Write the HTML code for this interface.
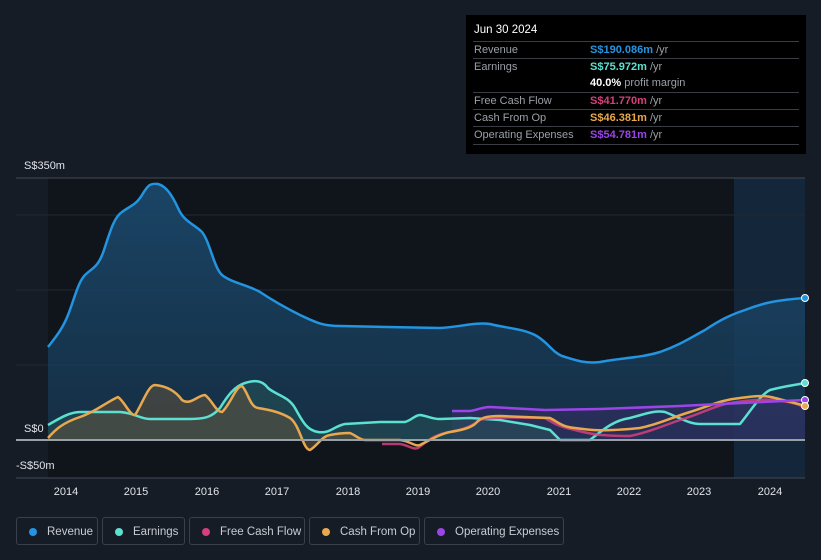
<!DOCTYPE html>
<html><head><meta charset="utf-8"><style>
body{margin:0;width:821px;height:560px;background:#161c26;font-family:"Liberation Sans",sans-serif;overflow:hidden;position:relative}
.tip{position:absolute;left:466px;top:15px;width:340px;height:139px;background:#000;color:#fff;font-size:11px}
.tip .h{position:absolute;left:8px;top:9px;font-size:11.5px}
.row{position:absolute;left:7px;width:326px;border-top:1px solid #3a3d44;height:17px}
.row span.l{position:absolute;left:1px;top:2px;color:#9aa0a8}
.row span.v{position:absolute;left:117px;top:2px;font-weight:bold}
.row span.v i{font-style:normal;font-weight:normal;color:#9aa0a8}
.leg{position:absolute;top:517px;height:28px;border:1px solid #3a404b;border-radius:3px;color:#c8ccd2;font-size:11.5px;line-height:28px;box-sizing:border-box;padding-left:30px}
.leg b{position:absolute;left:12px;top:10px;width:8px;height:8px;border-radius:50%}
.ax{position:absolute;color:#e0e3e8;font-size:11px}
</style></head><body>
<svg width="821" height="560" style="position:absolute;left:0;top:0">
<defs>
<linearGradient id="rv" x1="0" y1="0" x2="0" y2="1"><stop offset="0" stop-color="#1b4a6e" stop-opacity=".9"/><stop offset="1" stop-color="#173a56" stop-opacity=".7"/></linearGradient>
</defs>
<rect x="48" y="178" width="686" height="300" fill="#10141b"/>
<rect x="734" y="178" width="71" height="300" fill="#13263a"/>
<line x1="16" y1="178" x2="805" y2="178" stroke="#444a55"/>
<line x1="16" y1="215" x2="805" y2="215" stroke="#222833"/>
<line x1="16" y1="290" x2="805" y2="290" stroke="#222833"/>
<line x1="16" y1="365" x2="805" y2="365" stroke="#222833"/>
<line x1="16" y1="478" x2="805" y2="478" stroke="#444a55"/>
<path d="M48,347 C55,338 62,330 68,315 C74,300 78,282 85,275 C92,268 98,268 104,250 C110,232 114,217 122,212 C130,206 136,205 142,195 C148,185 150,183 158,184 C166,186 172,195 178,208 C184,222 194,224 202,232 C210,242 214,268 222,275 C232,283 248,285 260,292 C272,300 282,306 300,315 C315,322 322,326 340,326 L440,328 C460,327 475,322 490,324 C505,328 520,328 535,335 C548,342 552,352 562,356 C575,360 585,364 600,362 C620,358 640,358 660,352 C680,345 690,338 705,330 C720,320 730,315 745,310 C760,304 775,300 805,298 L805,440 L48,440Z" fill="url(#rv)"/>
<path d="M452,411 L470,411 L490,407 L545,410 L600,409 L680,406 L720,404 L805,400 L805,440 L452,440Z" fill="#3a2e6a" opacity=".5"/>
<path d="M48,425 C60,418 70,412 80,412 L120,412 C135,413 140,419 150,419 L190,419 C205,419 212,417 220,408 C228,395 235,386 245,383 C255,380 262,380 268,388 C276,395 288,396 295,408 C302,420 306,430 318,432 C330,434 334,426 345,424 L380,422 L405,422 C412,420 415,415 420,415 C428,416 432,419 440,419 L470,418 L500,420 L530,425 L550,430 L560,440 L48,440Z" fill="#2a5a5a" opacity=".45"/>
<path d="M48,438 C55,430 62,423 80,417 C95,412 105,403 118,397 C125,402 130,416 135,415 C142,405 148,385 155,385 C165,386 175,390 182,400 C190,406 198,395 205,395 C212,400 216,412 222,412 C230,405 236,386 242,386 C248,392 250,407 258,408 C270,410 280,412 290,418 C300,425 303,450 310,450 C318,445 322,436 330,435 C340,433 345,433 350,433 C357,436 360,440 365,440 L48,440Z" fill="#5a5040" opacity=".6"/>
<g fill="none" stroke-width="2.5" stroke-linejoin="round">
<path d="M48,347 C55,338 62,330 68,315 C74,300 78,282 85,275 C92,268 98,268 104,250 C110,232 114,217 122,212 C130,206 136,205 142,195 C148,185 150,183 158,184 C166,186 172,195 178,208 C184,222 194,224 202,232 C210,242 214,268 222,275 C232,283 248,285 260,292 C272,300 282,306 300,315 C315,322 322,326 340,326 L440,328 C460,327 475,322 490,324 C505,328 520,328 535,335 C548,342 552,352 562,356 C575,360 585,364 600,362 C620,358 640,358 660,352 C680,345 690,338 705,330 C720,320 730,315 745,310 C760,304 775,300 805,298" stroke="#2394e0"/>
<path d="M48,425 C60,418 70,412 80,412 L120,412 C135,413 140,419 150,419 L190,419 C205,419 212,417 220,408 C228,395 235,386 245,383 C255,380 262,380 268,388 C276,395 288,396 295,408 C302,420 306,430 318,432 C330,434 334,426 345,424 L380,422 L405,422 C412,420 415,415 420,415 C428,416 432,419 440,419 L470,418 L500,420 L530,425 L550,430 L560,440 L590,440 C605,428 615,420 630,418 C645,414 655,410 665,412 C680,418 690,424 700,424 L740,424 C750,412 760,395 770,390 C785,386 795,385 805,383" stroke="#5ce0d0"/>
<path d="M382,444 L400,444 C408,445 413,450 418,448 C425,443 432,436 445,433 C460,430 470,428 480,420 C490,416 530,418 545,418 C555,424 560,427 575,430 C590,434 600,436 630,436 C650,432 665,425 680,420 C700,414 710,408 725,404 C745,400 760,399 775,400 C790,402 800,404 805,408" stroke="#d63f7c" opacity=".85"/>
<path d="M48,438 C55,430 62,423 80,417 C95,412 105,403 118,397 C125,402 130,416 135,415 C142,405 148,385 155,385 C165,386 175,390 182,400 C190,406 198,395 205,395 C212,400 216,412 222,412 C230,405 236,386 242,386 C248,392 250,407 258,408 C270,410 280,412 290,418 C300,425 303,450 310,450 C318,445 322,436 330,435 C340,433 345,433 350,433 C357,436 360,440 365,440 L400,440 C410,441 415,447 420,445 C430,440 440,434 450,432 C462,430 470,428 475,424 C480,418 485,416 500,416 L550,418 C558,422 562,427 575,428 C590,430 600,432 640,428 C660,424 670,418 690,412 C710,406 720,400 740,398 C755,396 765,395 775,398 C790,402 800,404 805,406" stroke="#e8a84e"/>
<path d="M452,411 L470,411 C478,410 482,407 490,407 L545,410 L600,409 L680,406 L720,404 L805,400" stroke="#9b45e8"/>
</g>
<line x1="16" y1="440" x2="805" y2="440" stroke="#9aa0a8" stroke-width="2"/>
<circle cx="805" cy="298" r="3.5" fill="#2394e0" stroke="#fff"/>
<circle cx="805" cy="383" r="3.5" fill="#5ce0d0" stroke="#fff"/>
<circle cx="805" cy="400" r="3.5" fill="#9b45e8" stroke="#fff"/>
<circle cx="805" cy="406" r="3.5" fill="#e8a84e" stroke="#fff"/>
<g fill="#e0e3e8" font-size="11" font-family="Liberation Sans" text-anchor="middle">
<text x="66" y="495">2014</text><text x="136" y="495">2015</text><text x="207" y="495">2016</text><text x="277" y="495">2017</text><text x="348" y="495">2018</text><text x="418" y="495">2019</text><text x="488" y="495">2020</text><text x="559" y="495">2021</text><text x="629" y="495">2022</text><text x="699" y="495">2023</text><text x="770" y="495">2024</text>
</g>
</svg>
<div class="ax" style="left:24px;top:160px">S$350m</div>
<div class="ax" style="left:24px;top:423px">S$0</div>
<div class="ax" style="left:16px;top:460px">-S$50m</div>
<div class="tip">
<div class="h">Jun 30 2024</div>
<div class="row" style="top:26px"><span class="l">Revenue</span><span class="v" style="color:#2394e0">S$190.086m <i>/yr</i></span></div>
<div class="row" style="top:43px"><span class="l">Earnings</span><span class="v" style="color:#5ce0d0">S$75.972m <i>/yr</i></span></div>
<div class="row" style="top:60px;border-top:none"><span class="v" style="color:#fff">40.0% <i>profit margin</i></span></div>
<div class="row" style="top:77px"><span class="l">Free Cash Flow</span><span class="v" style="color:#d63f7c">S$41.770m <i>/yr</i></span></div>
<div class="row" style="top:94px"><span class="l">Cash From Op</span><span class="v" style="color:#e8a84e">S$46.381m <i>/yr</i></span></div>
<div class="row" style="top:111px"><span class="l">Operating Expenses</span><span class="v" style="color:#9b45e8">S$54.781m <i>/yr</i></span></div>
<div class="row" style="top:129px;height:0"></div>
</div>
<div class="leg" style="left:16px;width:82px"><b style="background:#2394e0"></b>Revenue</div>
<div class="leg" style="left:102px;width:83px"><b style="background:#5ce0d0"></b>Earnings</div>
<div class="leg" style="left:189px;width:116px"><b style="background:#d63f7c"></b>Free Cash Flow</div>
<div class="leg" style="left:309px;width:111px"><b style="background:#e8a84e"></b>Cash From Op</div>
<div class="leg" style="left:424px;width:140px"><b style="background:#9b45e8"></b>Operating Expenses</div>
</body></html>
